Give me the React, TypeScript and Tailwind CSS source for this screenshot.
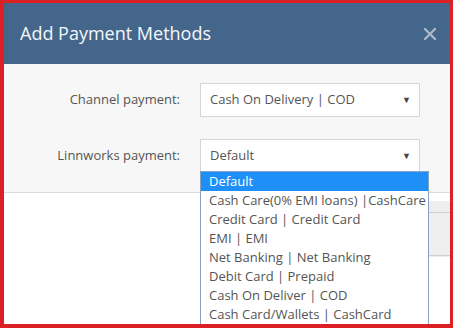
import React from "react";

const options = [
  "Default",
  "Cash Care(0% EMI loans) |CashCare",
  "Credit Card | Credit Card",
  "EMI | EMI",
  "Net Banking | Net Banking",
  "Debit Card | Prepaid",
  "Cash On Deliver | COD",
  "Cash Card/Wallets | CashCard",
];

function Select({ value }: { value: string }) {
  return (
    <div className="w-[220px] h-[34px] bg-white border border-[#d5d5d5] flex items-center justify-between pl-[9px] pr-[8px] text-[13px] text-[#555]">
      <span>{value}</span>
      <span className="text-[9px] text-[#444]">▼</span>
    </div>
  );
}

export default function App() {
  return (
    <div
      className="w-[453px] h-[328px] overflow-hidden bg-white border-t-[3px] border-l-[4px] border-r-[3px] border-b-[4px] border-[#dd1f26] relative"
      style={{ fontFamily: '"Open Sans", sans-serif' }}
    >
      <div className="h-[61px] bg-[#45668b] flex items-center justify-between pl-[16px] pr-[13px]">
        <span className="text-[18px] text-[#f4f7fa]">Add Payment Methods</span>
        <svg width="14" height="14" viewBox="0 0 14 14" className="mt-[1px]">
          <path d="M2 2 L12 12 M12 2 L2 12" stroke="#aab8c9" strokeWidth="2.4" strokeLinecap="round" />
        </svg>
      </div>
      <div className="bg-[#f7f7f7] border-b border-[#dcdcdc] pt-[19px] pb-[19px] flex flex-col gap-[22px]">
        <div className="flex items-center gap-[20px]">
          <div className="w-[176px] text-right text-[13px] text-[#555]">Channel payment:</div>
          <Select value="Cash On Delivery | COD" />
        </div>
        <div className="flex items-center gap-[20px]">
          <div className="w-[176px] text-right text-[13px] text-[#555]">Linnworks payment:</div>
          <Select value="Default" />
        </div>
      </div>
      <div className="flex justify-end pt-[8px]">
        <div className="w-[60px] h-[56px] bg-[#eeeeee] pl-[5px] pt-[11px]">
          <div className="h-[44px] border border-[#cfcfcf] border-r-0 bg-[#efefef]"></div>
        </div>
      </div>
      <div className="absolute left-[196px] top-[168px] w-[229px] bg-white border border-[#86a3c6] text-[13px] text-[#555]">
        {options.map((o, i) => (
          <div
            key={o}
            className={
              "h-[19px] leading-[19px] pl-[8px] whitespace-nowrap " +
              (i === 0 ? "bg-[#1e8ff7] text-white" : "")
            }
          >
            {o}
          </div>
        ))}
      </div>
    </div>
  );
}
